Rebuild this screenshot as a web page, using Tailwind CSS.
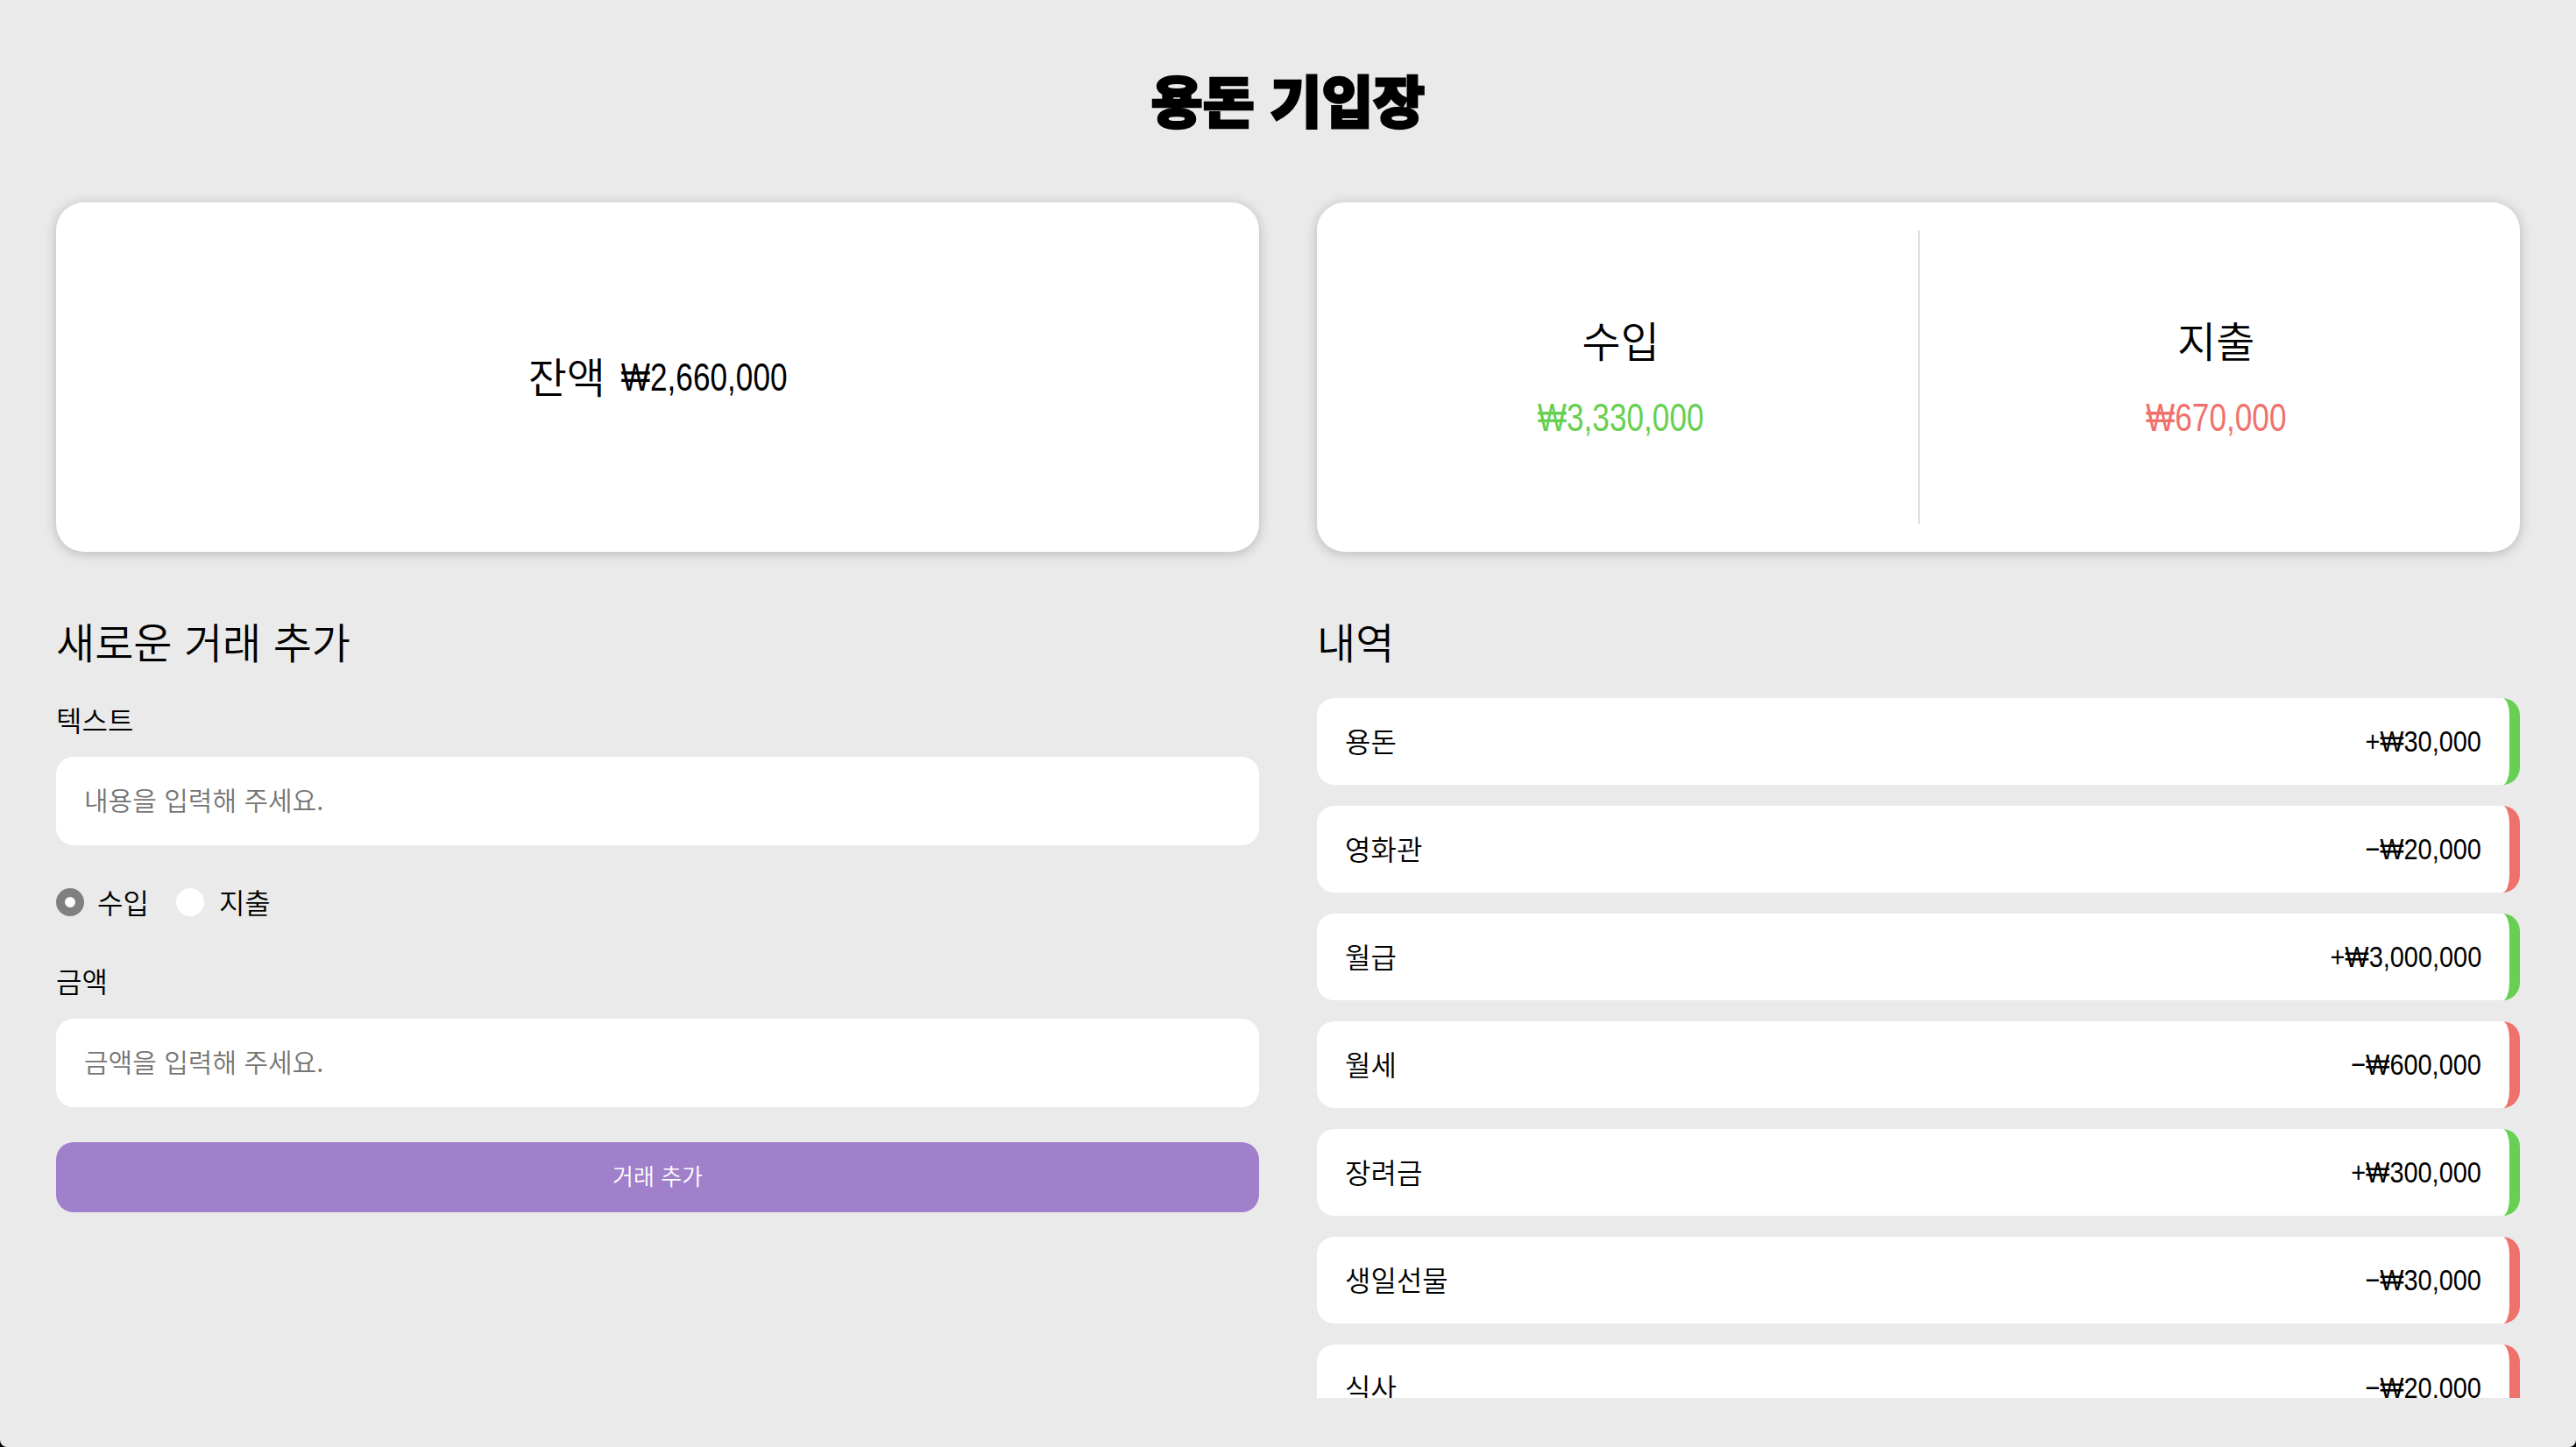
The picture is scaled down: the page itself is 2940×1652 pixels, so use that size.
<!DOCTYPE html>
<html lang="ko">
<head>
<meta charset="UTF-8">
<title>용돈 기입장</title>
<script src="https://cdn.jsdelivr.net/npm/@tailwindcss/browser@4"></script>
</head>
<body class="bg-black h-[1652px] overflow-hidden font-['Noto_Sans_CJK_KR',sans-serif] text-black">
<div class="h-[1652px] bg-[#eaeaea] rounded-b-[8px] px-[64px] pt-[76px]">
    <h1 class="text-center text-[64px] leading-[72px] font-black [-webkit-text-stroke:2.5px_black]">용돈 기입장</h1>

    <!-- summary cards -->
    <div class="grid grid-cols-2 gap-[66px] mt-[83px]">
        <div class="h-[399px] rounded-[32px] bg-white shadow-[0_2px_14px_rgba(0,0,0,0.22)] flex items-center justify-center gap-[14px]">
            <span class="text-[48px] leading-none mb-[6px] font-[350]">잔액</span>
            <span class="text-[44px] leading-none inline-block scale-x-[0.8] ml-[-20px] mr-[-24px] font-['Liberation_Sans']">₩2,660,000</span>
        </div>
        <div class="h-[399px] rounded-[32px] bg-white shadow-[0_2px_14px_rgba(0,0,0,0.22)] py-[32px] flex">
            <div class="flex-1 flex flex-col items-center justify-center border-r-2 border-[#dddddd] pl-[8px]">
                <div class="text-[48px] leading-[60px] font-[350]">수입</div>
                <div class="text-[44px] leading-[56px] mt-[32px] text-[#67cf51] scale-x-[0.8] font-['Liberation_Sans']">₩3,330,000</div>
            </div>
            <div class="flex-1 flex flex-col items-center justify-center pr-[8px]">
                <div class="text-[48px] leading-[60px] font-[350]">지출</div>
                <div class="text-[44px] leading-[56px] mt-[32px] text-[#ef716c] scale-x-[0.8] font-['Liberation_Sans']">₩670,000</div>
            </div>
        </div>
    </div>

    <div class="grid grid-cols-2 gap-[66px] mt-[66px]">
        <!-- form -->
        <div>
            <h2 class="text-[48px] leading-[70px] font-[350]">새로운 거래 추가</h2>
            <label class="block text-[32px] leading-[40px] mt-[35px] font-[350]">텍스트</label>
            <input class="block w-full h-[101px] mt-[23px] pl-[32px] pr-[32px] pb-[6px] rounded-[20px] bg-white text-[30px] font-[350] placeholder:text-[#757575] outline-none" placeholder="내용을 입력해 주세요.">
            <div class="flex items-center mt-[48px] h-[34px] text-[32px] font-[350]">
                <span class="w-[32px] h-[32px] rounded-full border-[10px] border-[#808080] bg-white"></span>
                <span class="ml-[15px] mb-[3px]">수입</span>
                <span class="w-[32px] h-[32px] rounded-full bg-white ml-[31px]"></span>
                <span class="ml-[17px] mb-[3px]">지출</span>
            </div>
            <label class="block text-[32px] leading-[40px] mt-[52px] font-[350]">금액</label>
            <input class="block w-full h-[101px] mt-[24px] pl-[32px] pr-[32px] pb-[6px] rounded-[20px] bg-white text-[30px] font-[350] placeholder:text-[#757575] outline-none" placeholder="금액을 입력해 주세요.">
            <button class="block w-full h-[80px] mt-[40px] pb-[6px] rounded-[20px] bg-[#a07fcb] text-white text-[26px] font-[350]">거래 추가</button>
        </div>

        <!-- history -->
        <div>
            <h2 class="text-[48px] leading-[70px] font-[350]">내역</h2>
            <div class="mt-[31px] h-[799px] overflow-hidden flex flex-col gap-[24px] text-[32px] font-[350]">
                <div class="h-[99px] shrink-0 bg-white rounded-[20px] border-r-[12px] border-[#67cf51] px-[32px] flex items-center justify-between"><span class="mb-[4px]">용돈</span><span class="font-['Liberation_Sans'] font-normal text-[34px] origin-right scale-x-[0.85] inline-block">+₩30,000</span></div>
                <div class="h-[99px] shrink-0 bg-white rounded-[20px] border-r-[12px] border-[#ef716c] px-[32px] flex items-center justify-between"><span class="mb-[4px]">영화관</span><span class="font-['Liberation_Sans'] font-normal text-[34px] origin-right scale-x-[0.85] inline-block">−₩20,000</span></div>
                <div class="h-[99px] shrink-0 bg-white rounded-[20px] border-r-[12px] border-[#67cf51] px-[32px] flex items-center justify-between"><span class="mb-[4px]">월급</span><span class="font-['Liberation_Sans'] font-normal text-[34px] origin-right scale-x-[0.85] inline-block">+₩3,000,000</span></div>
                <div class="h-[99px] shrink-0 bg-white rounded-[20px] border-r-[12px] border-[#ef716c] px-[32px] flex items-center justify-between"><span class="mb-[4px]">월세</span><span class="font-['Liberation_Sans'] font-normal text-[34px] origin-right scale-x-[0.85] inline-block">−₩600,000</span></div>
                <div class="h-[99px] shrink-0 bg-white rounded-[20px] border-r-[12px] border-[#67cf51] px-[32px] flex items-center justify-between"><span class="mb-[4px]">장려금</span><span class="font-['Liberation_Sans'] font-normal text-[34px] origin-right scale-x-[0.85] inline-block">+₩300,000</span></div>
                <div class="h-[99px] shrink-0 bg-white rounded-[20px] border-r-[12px] border-[#ef716c] px-[32px] flex items-center justify-between"><span class="mb-[4px]">생일선물</span><span class="font-['Liberation_Sans'] font-normal text-[34px] origin-right scale-x-[0.85] inline-block">−₩30,000</span></div>
                <div class="h-[99px] shrink-0 bg-white rounded-[20px] border-r-[12px] border-[#ef716c] px-[32px] flex items-center justify-between"><span class="mb-[4px]">식사</span><span class="font-['Liberation_Sans'] font-normal text-[34px] origin-right scale-x-[0.85] inline-block">−₩20,000</span></div>
            </div>
        </div>
    </div>
</div>
</body>
</html>
